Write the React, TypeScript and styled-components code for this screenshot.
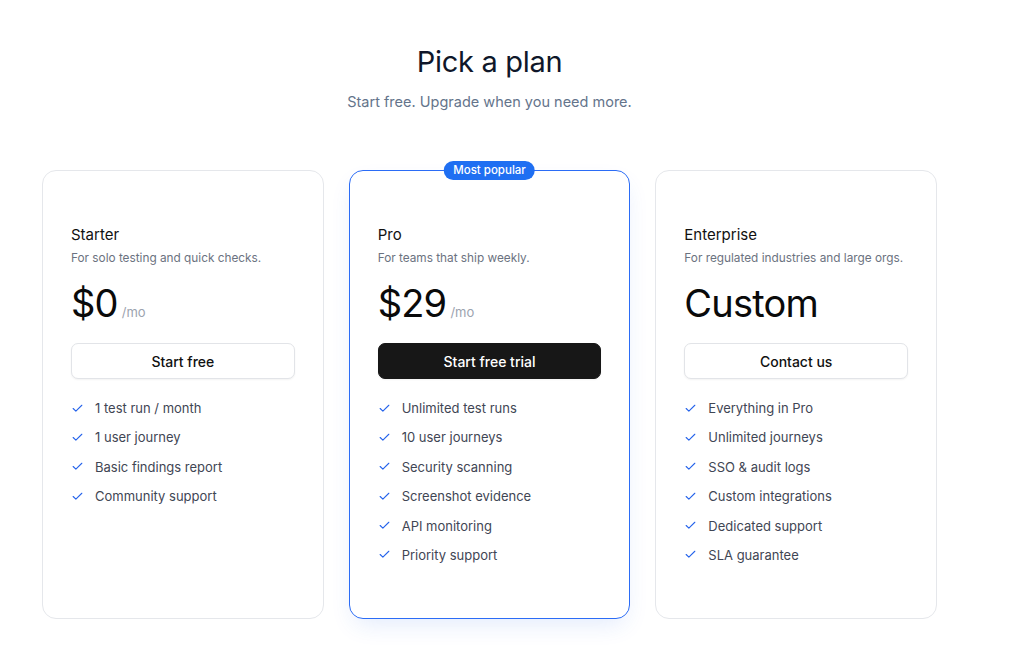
import React from "react";
import styled, { createGlobalStyle, css } from "styled-components";

const GlobalStyle = createGlobalStyle`
  html, body {
    margin: 0;
    padding: 0;
    background: #ffffff;
  }
  body {
    font-family: "Inter", "Noto Sans", "Liberation Sans", sans-serif;
    color: #111827;
    -webkit-font-smoothing: antialiased;
  }
`;

const Page = styled.div`
  width: 895px;
  padding: 42px 0 40px 42px;
`;

const Header = styled.header`
  display: flex;
  flex-direction: column;
  align-items: center;
  margin-bottom: 58px;
`;

const Title = styled.h1`
  margin: 0;
  font-size: 29px;
  font-weight: 400;
  line-height: 40px;
  color: #0f172a;
  letter-spacing: -0.3px;
`;

const Subtitle = styled.p`
  margin: 10px 0 0;
  font-size: 14.5px;
  line-height: 20px;
  color: #64748b;
`;

const Grid = styled.div`
  display: grid;
  grid-template-columns: repeat(3, 1fr);
  gap: 25px;
`;

const Card = styled.div<{ $featured?: boolean }>`
  position: relative;
  display: flex;
  flex-direction: column;
  border: 1px solid #e5e7eb;
  border-radius: 14px;
  padding: 53px 28px 53px;
  background: #fff;
  ${(p) =>
    p.$featured &&
    css`
      border-color: #2b6cf6;
      box-shadow: 0 10px 24px -6px rgba(37, 99, 235, 0.14);
    `}
`;

const Badge = styled.span`
  position: absolute;
  top: -10px;
  left: 50%;
  transform: translateX(-50%);
  height: 19px;
  padding: 0 9px;
  border-radius: 999px;
  background: #1f6ff2;
  color: #fff;
  font-size: 11.5px;
  font-weight: 500;
  line-height: 19px;
  white-space: nowrap;
`;

const Name = styled.h2`
  margin: 0;
  font-size: 15px;
  font-weight: 400;
  line-height: 22px;
  color: #111;
`;

const Description = styled.p`
  margin: 3px 0 0;
  font-size: 11.8px;
  line-height: 18px;
  color: #6b7280;
  white-space: nowrap;
`;

const PriceRow = styled.div`
  display: flex;
  align-items: baseline;
  gap: 4px;
  margin-top: 12px;
  height: 48px;
`;

const Amount = styled.span`
  font-size: 38px;
  font-weight: 400;
  line-height: 48px;
  color: #0a0a0a;
  letter-spacing: -0.8px;
`;

const Period = styled.span`
  font-size: 13px;
  color: #9ca3af;
`;

const ActionButton = styled.button<{ $primary?: boolean }>`
  margin-top: 16px;
  height: 36px;
  width: 100%;
  border-radius: 7px;
  font-family: inherit;
  font-size: 14px;
  font-weight: 500;
  cursor: pointer;
  border: 1px solid #e2e4e8;
  background: #fff;
  color: #111;
  box-shadow: 0 1px 2px rgba(0, 0, 0, 0.05);
  ${(p) =>
    p.$primary &&
    css`
      border-color: #171717;
      background: #171717;
      color: #fff;
    `}
`;

const Features = styled.ul`
  list-style: none;
  margin: 19px 0 0;
  padding: 0;
  display: flex;
  flex-direction: column;
  gap: 9.4px;
`;

const Feature = styled.li`
  display: flex;
  align-items: center;
  gap: 11px;
  font-size: 13px;
  line-height: 20px;
  color: #3f4654;
`;

const CheckIcon = () => (
  <svg width="13" height="13" viewBox="0 0 24 24" fill="none" stroke="#2563eb" strokeWidth="2" strokeLinecap="round" strokeLinejoin="round">
    <path d="M20 6 9 17l-5-5" />
  </svg>
);

interface Plan {
  name: string;
  description: string;
  price: string;
  period?: string;
  cta: string;
  featured?: boolean;
  features: string[];
}

const plans: Plan[] = [
  {
    name: "Starter",
    description: "For solo testing and quick checks.",
    price: "$0",
    period: "/mo",
    cta: "Start free",
    features: ["1 test run / month", "1 user journey", "Basic findings report", "Community support"],
  },
  {
    name: "Pro",
    description: "For teams that ship weekly.",
    price: "$29",
    period: "/mo",
    cta: "Start free trial",
    featured: true,
    features: [
      "Unlimited test runs",
      "10 user journeys",
      "Security scanning",
      "Screenshot evidence",
      "API monitoring",
      "Priority support",
    ],
  },
  {
    name: "Enterprise",
    description: "For regulated industries and large orgs.",
    price: "Custom",
    cta: "Contact us",
    features: [
      "Everything in Pro",
      "Unlimited journeys",
      "SSO & audit logs",
      "Custom integrations",
      "Dedicated support",
      "SLA guarantee",
    ],
  },
];

export default function App() {
  return (
    <>
      <GlobalStyle />
      <Page>
        <Header>
          <Title>Pick a plan</Title>
          <Subtitle>Start free. Upgrade when you need more.</Subtitle>
        </Header>
        <Grid>
          {plans.map((plan) => (
            <Card key={plan.name} $featured={plan.featured}>
              {plan.featured && <Badge>Most popular</Badge>}
              <Name>{plan.name}</Name>
              <Description>{plan.description}</Description>
              <PriceRow>
                <Amount>{plan.price}</Amount>
                {plan.period && <Period>{plan.period}</Period>}
              </PriceRow>
              <ActionButton $primary={plan.featured}>{plan.cta}</ActionButton>
              <Features>
                {plan.features.map((f) => (
                  <Feature key={f}>
                    <CheckIcon />
                    {f}
                  </Feature>
                ))}
              </Features>
            </Card>
          ))}
        </Grid>
      </Page>
    </>
  );
}
